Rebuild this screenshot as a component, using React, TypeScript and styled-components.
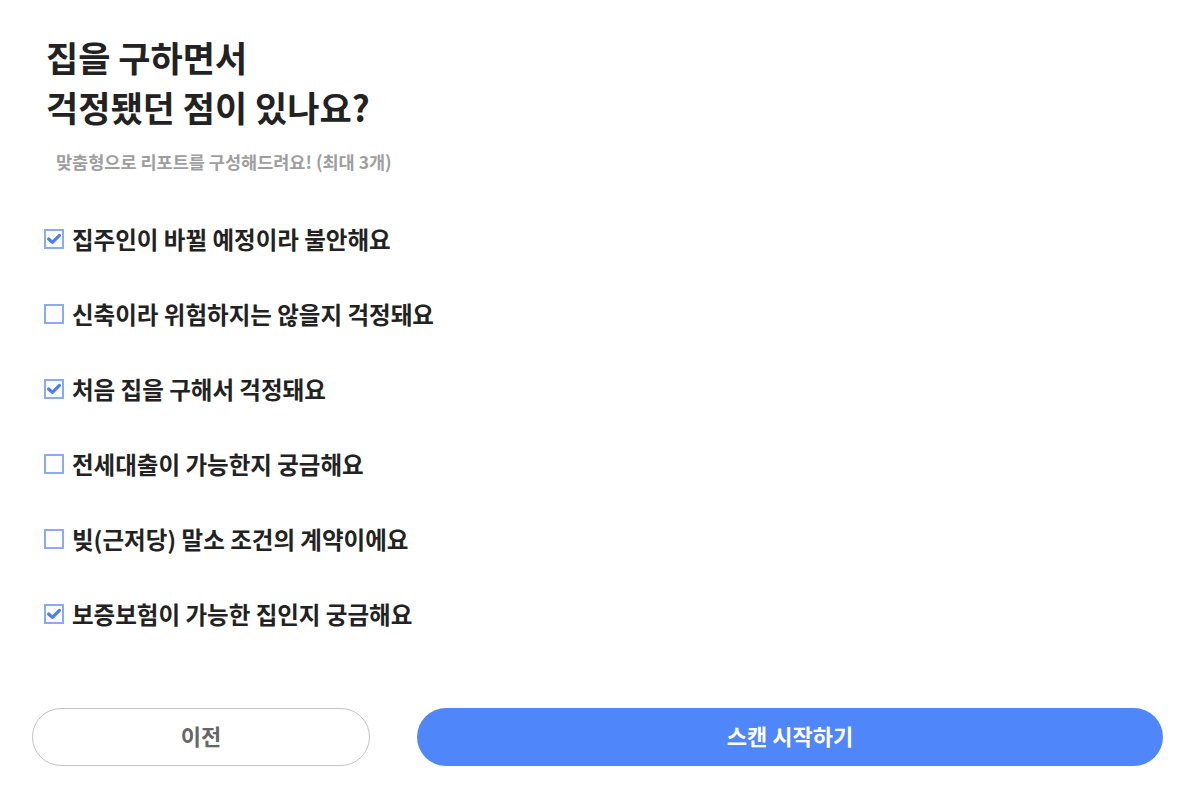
import React, { useState } from 'react'
import styled, { createGlobalStyle } from 'styled-components'

const GlobalStyle = createGlobalStyle`
  html, body {
    margin: 0;
    padding: 0;
    background: #ffffff;
  }
  body {
    font-family: "Noto Sans CJK KR", "Noto Sans", sans-serif;
    color: #222222;
  }
`

const Page = styled.div`
  width: 1200px;
  height: 806px;
  box-sizing: border-box;
  display: flex;
  flex-direction: column;
  padding: 32px 37px 40px 32px;
`

const Title = styled.h1`
  margin: 0 0 0 14px;
  font-size: 35px;
  line-height: 50px;
  font-weight: 700;
  color: #222222;
`

const SubTitle = styled.p`
  margin: 18px 0 0 24px;
  font-size: 17.5px;
  line-height: 24px;
  font-weight: 700;
  color: #9e9e9e;
`

const OptionList = styled.div`
  display: flex;
  flex-direction: column;
  gap: 41px;
  margin: 48px 0 0 12px;
`

const OptionRow = styled.label`
  display: flex;
  align-items: center;
  gap: 8px;
  height: 34px;
  cursor: pointer;
`

const Box = styled.span`
  width: 20px;
  height: 20px;
  box-sizing: border-box;
  border: 2px solid #8aa9f6;
  display: flex;
  align-items: center;
  justify-content: center;
  background: #ffffff;
`

const OptionText = styled.span`
  font-size: 23.5px;
  font-weight: 700;
  color: #222222;
`

const Footer = styled.div`
  margin-top: auto;
  display: flex;
  gap: 47px;
`

const Button = styled.button<{ $primary?: boolean }>`
  height: 58px;
  padding: 0 0 5px;
  border-radius: 29px;
  font-family: "Noto Sans CJK KR", "Noto Sans", sans-serif;
  font-size: 22px;
  font-weight: 700;
  cursor: pointer;
  border: ${p => (p.$primary ? 'none' : '1.5px solid #c4c4c4')};
  background: ${p => (p.$primary ? '#4f87fb' : '#ffffff')};
  color: ${p => (p.$primary ? '#ffffff' : '#666666')};
  width: ${p => (p.$primary ? '746px' : '338px')};
`

const options = [
  { label: '집주인이 바뀔 예정이라 불안해요', checked: true },
  { label: '신축이라 위험하지는 않을지 걱정돼요', checked: false },
  { label: '처음 집을 구해서 걱정돼요', checked: true },
  { label: '전세대출이 가능한지 궁금해요', checked: false },
  { label: '빚(근저당) 말소 조건의 계약이에요', checked: false },
  { label: '보증보험이 가능한 집인지 궁금해요', checked: true },
]

const Check = () => (
  <svg width="16" height="16" viewBox="0 0 16 16">
    <path d="M2.6 8 L6.4 11.4 L13.4 4.4" fill="none" stroke="#4a7ef5" strokeWidth="3.2" strokeLinecap="round" strokeLinejoin="round" />
  </svg>
)

export default function App() {
  const [checked, setChecked] = useState(options.map(o => o.checked))

  const toggle = (i: number) => {
    setChecked(prev => prev.map((c, idx) => (idx === i ? !c : c)))
  }

  return (
    <Page>
      <GlobalStyle />
      <Title>
        집을 구하면서
        <br />
        걱정됐던 점이 있나요?
      </Title>
      <SubTitle>맞춤형으로 리포트를 구성해드려요! (최대 3개)</SubTitle>
      <OptionList>
        {options.map((o, i) => (
          <OptionRow key={o.label} onClick={() => toggle(i)}>
            <Box>{checked[i] && <Check />}</Box>
            <OptionText>{o.label}</OptionText>
          </OptionRow>
        ))}
      </OptionList>
      <Footer>
        <Button>이전</Button>
        <Button $primary>스캔 시작하기</Button>
      </Footer>
    </Page>
  )
}
